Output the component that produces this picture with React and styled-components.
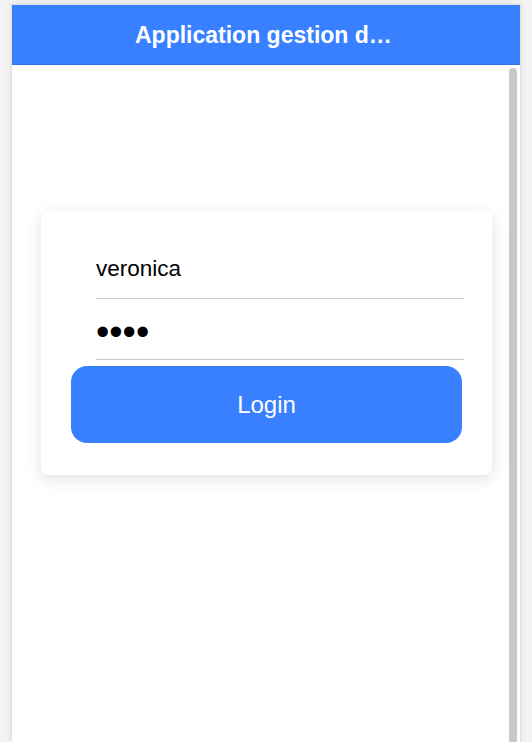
import styled, { createGlobalStyle } from "styled-components"

const GlobalStyle = createGlobalStyle`
  html, body {
    margin: 0;
    padding: 0;
    background: #f3f3f3;
    font-family: "Liberation Sans", Arial, sans-serif;
  }
`

const Frame = styled.div`
  margin: 4px 11px 0;
  height: 738px;
  border: 1px solid #dedede;
  border-bottom: none;
  background: #fff;
  box-shadow: 0 0 8px rgba(0, 0, 0, 0.08);
  display: flex;
  flex-direction: column;
  overflow: hidden;
`

const Header = styled.header`
  height: 60px;
  flex-shrink: 0;
  box-sizing: border-box;
  padding-top: 1px;
  background: #3880ff;
  border-bottom: 1px solid #3171e0;
  display: flex;
  align-items: center;
  justify-content: center;
`

const Title = styled.h1`
  margin: 0;
  max-width: 262px;
  color: #fff;
  font-size: 23px;
  font-weight: 700;
  white-space: nowrap;
  overflow: hidden;
  text-overflow: ellipsis;
  text-align: center;
`

const Content = styled.main`
  position: relative;
  flex: 1;
  padding: 146px 28px 0 29px;
`

const ScrollThumb = styled.div`
  position: absolute;
  top: 3px;
  right: 3px;
  bottom: 0;
  width: 8px;
  border-radius: 4px 4px 0 0;
  background: #c8c8c8;
`

const Card = styled.form`
  background: #fff;
  border-radius: 8px;
  box-shadow: 0 4px 16px rgba(0, 0, 0, 0.12);
  padding: 27px 28px 32px;
`

const Field = styled.div`
  margin-left: 27px;
  height: 60px;
  display: flex;
  align-items: center;
  border-bottom: 1px solid #c8c8c8;
`

const Input = styled.input`
  width: 100%;
  border: none;
  outline: none;
  padding: 0;
  background: transparent;
  font-family: "Liberation Sans", Arial, sans-serif;
  font-size: ${(p) => p.$size || 22.5}px;
  line-height: 1;
  color: #000;
  margin-top: ${(p) => p.$offset || 0}px;
`

const Button = styled.button`
  display: block;
  width: calc(100% - 4px);
  margin: 6px 2px 0;
  height: 77px;
  border: none;
  border-radius: 16px;
  background: #3880ff;
  color: #fff;
  font-family: "Liberation Sans", Arial, sans-serif;
  font-size: 24px;
  cursor: pointer;
`

const App = () => {
  return (
    <>
      <GlobalStyle />
      <Frame>
        <Header>
          <Title>Application gestion des utilisateurs</Title>
        </Header>
        <Content>
          <Card onSubmit={(e) => e.preventDefault()}>
            <Field>
              <Input type="text" defaultValue="veronica" $offset={2} />
            </Field>
            <Field>
              <Input type="password" defaultValue="abcd" $size={38} $offset={6} />
            </Field>
            <Button type="submit">Login</Button>
          </Card>
          <ScrollThumb />
        </Content>
      </Frame>
    </>
  )
}

export default App
